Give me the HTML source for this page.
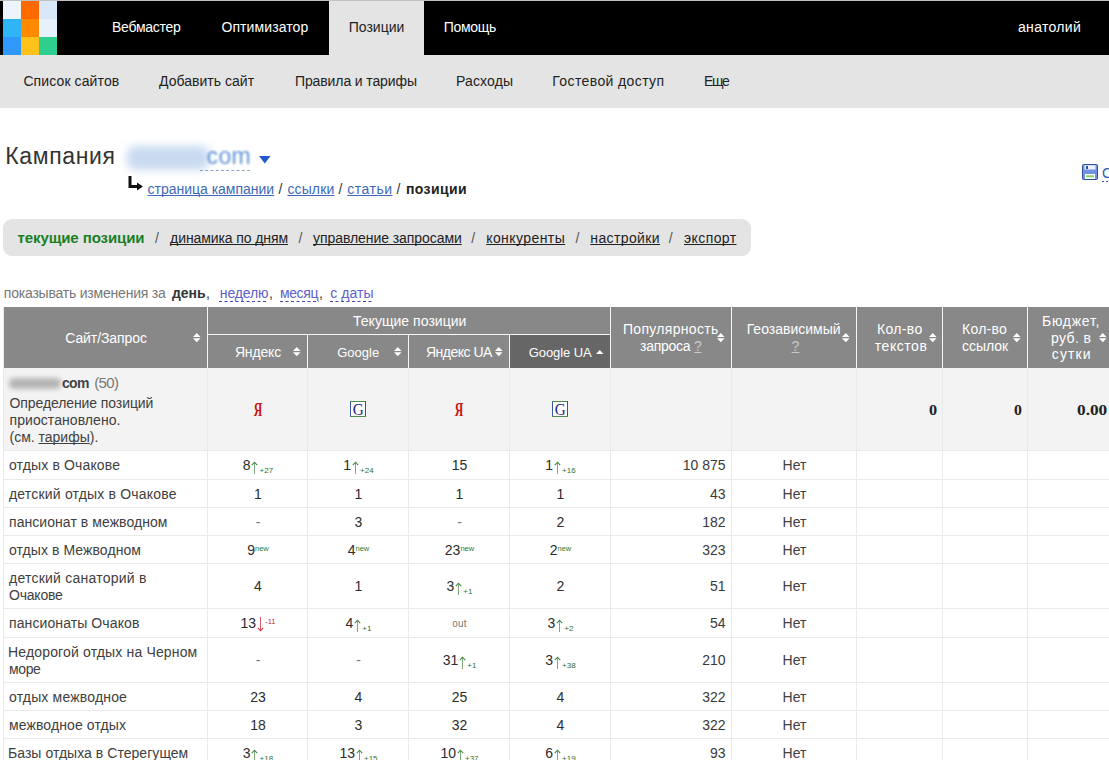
<!DOCTYPE html>
<html><head><meta charset="utf-8"><style>
html,body{margin:0;padding:0;background:#fff;width:1109px;height:760px;overflow:hidden;position:relative}
.t{position:absolute;white-space:nowrap;font-family:'Liberation Sans', sans-serif;text-decoration-skip-ink:none}
.r{position:absolute}
.arw{vertical-align:-3.5px;margin-left:0.5px;margin-right:1.5px}
.up{color:#2f7a2f}
.dn{color:#c82838}
.sub{font-size:8px;letter-spacing:0;position:relative;top:2.6px;color:#2f6f2f}
.sup{font-size:7.5px;letter-spacing:0;position:relative;top:-4.2px}
.out{font-size:10px;color:#777;letter-spacing:0.2px;position:relative;top:-1px}
.dash{color:#777}
</style></head><body>
<div class="r" style="left:0px;top:0px;width:1109px;height:1px;background:#c0c0c0;"></div>
<div class="r" style="left:0px;top:1px;width:1109px;height:54px;background:#000;"></div>
<div class="r" style="left:3px;top:1px;width:18px;height:18px;background:#eef4fc;"></div>
<div class="r" style="left:21px;top:1px;width:18px;height:18px;background:#ff6a00;"></div>
<div class="r" style="left:39px;top:1px;width:18px;height:18px;background:#d9e8f9;"></div>
<div class="r" style="left:3px;top:19px;width:18px;height:18px;background:#2fb5f5;"></div>
<div class="r" style="left:21px;top:19px;width:18px;height:18px;background:#ff8a00;"></div>
<div class="r" style="left:39px;top:19px;width:18px;height:18px;background:#e6f1fc;"></div>
<div class="r" style="left:3px;top:37px;width:18px;height:18px;background:#3097fb;"></div>
<div class="r" style="left:21px;top:37px;width:18px;height:18px;background:#ffc21a;"></div>
<div class="r" style="left:39px;top:37px;width:18px;height:18px;background:#2ecf8e;"></div>
<div class="r" style="left:329px;top:1px;width:95px;height:54px;background:#e4e4e4;"></div>
<div class="t" style="left:112.00px;top:19px;font-size:14px;line-height:16.1px;color:#fff;font-weight:normal;letter-spacing:-0.266px;font-family:'Liberation Sans', sans-serif;">Вебмастер</div>
<div class="t" style="left:221.40px;top:19px;font-size:14px;line-height:16.1px;color:#fff;font-weight:normal;letter-spacing:0.101px;font-family:'Liberation Sans', sans-serif;">Оптимизатор</div>
<div class="t" style="left:348.70px;top:19px;font-size:14px;line-height:16.1px;color:#222;font-weight:normal;letter-spacing:0.022px;font-family:'Liberation Sans', sans-serif;">Позиции</div>
<div class="t" style="left:443.70px;top:19px;font-size:14px;line-height:16.1px;color:#fff;font-weight:normal;letter-spacing:-0.296px;font-family:'Liberation Sans', sans-serif;">Помощь</div>
<div class="t" style="left:1018.00px;top:19px;font-size:14px;line-height:16.1px;color:#fff;font-weight:normal;letter-spacing:0.326px;font-family:'Liberation Sans', sans-serif;">анатолий</div>
<div class="r" style="left:0px;top:55px;width:1109px;height:53px;background:#e4e4e4;"></div>
<div class="t" style="left:23.40px;top:73px;font-size:14px;line-height:16.1px;color:#222;font-weight:normal;letter-spacing:0.107px;font-family:'Liberation Sans', sans-serif;">Список сайтов</div>
<div class="t" style="left:159.00px;top:73px;font-size:14px;line-height:16.1px;color:#222;font-weight:normal;letter-spacing:0.028px;font-family:'Liberation Sans', sans-serif;">Добавить сайт</div>
<div class="t" style="left:295.00px;top:73px;font-size:14px;line-height:16.1px;color:#222;font-weight:normal;letter-spacing:-0.114px;font-family:'Liberation Sans', sans-serif;">Правила и тарифы</div>
<div class="t" style="left:456.00px;top:73px;font-size:14px;line-height:16.1px;color:#222;font-weight:normal;letter-spacing:0.142px;font-family:'Liberation Sans', sans-serif;">Расходы</div>
<div class="t" style="left:552.30px;top:73px;font-size:14px;line-height:16.1px;color:#222;font-weight:normal;letter-spacing:0.388px;font-family:'Liberation Sans', sans-serif;">Гостевой доступ</div>
<div class="t" style="left:704.00px;top:73px;font-size:14px;line-height:16.1px;color:#222;font-weight:normal;letter-spacing:-1.350px;font-family:'Liberation Sans', sans-serif;">Еще</div>
<div class="t" style="left:5.30px;top:143px;font-size:23px;line-height:26.45px;color:#333;font-weight:normal;letter-spacing:0.643px;font-family:'Liberation Sans', sans-serif;">Кампания</div>
<div class="r" style="left:127px;top:146px;width:82px;height:24px;background:#c9daf0;filter:blur(4px);border-radius:8px"></div>
<div class="t" style="left:206.60px;top:143px;font-size:23px;line-height:26.45px;color:#6094d6;font-weight:normal;letter-spacing:0.354px;font-family:'Liberation Sans', sans-serif;filter:blur(1px);">com</div>
<div class="r" style="left:200px;top:170px;width:50px;height:0;border-top:1px dashed #8aa4c8"></div>
<svg class="r" style="left:259px;top:156px" width="12" height="8"><path d="M0 0 L11.5 0 L5.75 7.5 Z" fill="#2258d0"/></svg>
<svg class="r" style="left:127px;top:175px" width="18" height="17"><path d="M3 1 V11.5 H11" stroke="#111" stroke-width="3" fill="none"/><path d="M10 7.5 L16 11.5 L10 15.5 Z" fill="#111"/></svg>
<div class="t" style="left:147.60px;top:181px;font-size:14px;line-height:16.1px;color:#4068b8;font-weight:normal;letter-spacing:-0.018px;font-family:'Liberation Sans', sans-serif;text-decoration:underline;">страница кампании</div>
<div class="t" style="left:278.50px;top:181px;font-size:14px;line-height:16.1px;color:#333;font-weight:normal;letter-spacing:0.000px;font-family:'Liberation Sans', sans-serif;">/</div>
<div class="t" style="left:287.40px;top:181px;font-size:14px;line-height:16.1px;color:#4068b8;font-weight:normal;letter-spacing:0.129px;font-family:'Liberation Sans', sans-serif;text-decoration:underline;">ссылки</div>
<div class="t" style="left:338.50px;top:181px;font-size:14px;line-height:16.1px;color:#333;font-weight:normal;letter-spacing:0.000px;font-family:'Liberation Sans', sans-serif;">/</div>
<div class="t" style="left:347.30px;top:181px;font-size:14px;line-height:16.1px;color:#4068b8;font-weight:normal;letter-spacing:0.492px;font-family:'Liberation Sans', sans-serif;text-decoration:underline;">статьи</div>
<div class="t" style="left:396.50px;top:181px;font-size:14px;line-height:16.1px;color:#333;font-weight:normal;letter-spacing:0.000px;font-family:'Liberation Sans', sans-serif;">/</div>
<div class="t" style="left:406.00px;top:181px;font-size:14px;line-height:16.1px;color:#222;font-weight:bold;letter-spacing:0.400px;font-family:'Liberation Sans', sans-serif;">позиции</div>
<svg class="r" style="left:1082px;top:164px" width="16" height="16"><rect x="0.5" y="0.5" width="15" height="15" rx="1" fill="#6f93e0" stroke="#2f4f9f"/><rect x="2.5" y="1.2" width="11" height="4.3" fill="#eef3ff"/><rect x="4" y="2" width="2" height="3" fill="#2f4f9f"/><rect x="3" y="10" width="10" height="5" fill="#fff"/><rect x="4" y="11.3" width="8" height="2" fill="#8ccc6a"/></svg>
<div class="t" style="left:1102.00px;top:165px;font-size:14px;line-height:16.1px;color:#2a5ab0;font-weight:normal;letter-spacing:0.000px;font-family:'Liberation Sans', sans-serif;">С</div>
<div class="r" style="left:1102px;top:181px;width:8px;height:1px;background:repeating-linear-gradient(to right,#2a5ab0 0 2px,transparent 2px 4px)"></div>
<div class="r" style="left:3px;top:219px;width:748px;height:37px;background:#e4e4e4;border-radius:9px"></div>
<div class="t" style="left:17.50px;top:229px;font-size:15px;line-height:17.25px;color:#1a7f24;font-weight:bold;letter-spacing:-0.091px;font-family:'Liberation Sans', sans-serif;">текущие позиции</div>
<div class="t" style="left:155.00px;top:230px;font-size:14px;line-height:16.1px;color:#555;font-weight:normal;letter-spacing:0.000px;font-family:'Liberation Sans', sans-serif;">/</div>
<div class="t" style="left:298.50px;top:230px;font-size:14px;line-height:16.1px;color:#555;font-weight:normal;letter-spacing:0.000px;font-family:'Liberation Sans', sans-serif;">/</div>
<div class="t" style="left:471.30px;top:230px;font-size:14px;line-height:16.1px;color:#555;font-weight:normal;letter-spacing:0.000px;font-family:'Liberation Sans', sans-serif;">/</div>
<div class="t" style="left:575.40px;top:230px;font-size:14px;line-height:16.1px;color:#555;font-weight:normal;letter-spacing:0.000px;font-family:'Liberation Sans', sans-serif;">/</div>
<div class="t" style="left:668.70px;top:230px;font-size:14px;line-height:16.1px;color:#555;font-weight:normal;letter-spacing:0.000px;font-family:'Liberation Sans', sans-serif;">/</div>
<div class="t" style="left:170.10px;top:230px;font-size:14px;line-height:16.1px;color:#222;font-weight:normal;letter-spacing:-0.093px;font-family:'Liberation Sans', sans-serif;text-decoration:underline;">динамика по дням</div>
<div class="t" style="left:313.00px;top:230px;font-size:14px;line-height:16.1px;color:#222;font-weight:normal;letter-spacing:-0.064px;font-family:'Liberation Sans', sans-serif;text-decoration:underline;">управление запросами</div>
<div class="t" style="left:486.20px;top:230px;font-size:14px;line-height:16.1px;color:#222;font-weight:normal;letter-spacing:0.429px;font-family:'Liberation Sans', sans-serif;text-decoration:underline;">конкуренты</div>
<div class="t" style="left:590.30px;top:230px;font-size:14px;line-height:16.1px;color:#222;font-weight:normal;letter-spacing:0.382px;font-family:'Liberation Sans', sans-serif;text-decoration:underline;">настройки</div>
<div class="t" style="left:684.00px;top:230px;font-size:14px;line-height:16.1px;color:#222;font-weight:normal;letter-spacing:0.405px;font-family:'Liberation Sans', sans-serif;text-decoration:underline;">экспорт</div>
<div class="t" style="left:3.80px;top:285px;font-size:14px;line-height:16.1px;color:#777;font-weight:normal;letter-spacing:-0.212px;font-family:'Liberation Sans', sans-serif;">показывать изменения за</div>
<div class="t" style="left:172.00px;top:285px;font-size:14px;line-height:16.1px;color:#333;font-weight:bold;letter-spacing:-0.043px;font-family:'Liberation Sans', sans-serif;">день</div>
<div class="t" style="left:206.00px;top:285px;font-size:14px;line-height:16.1px;color:#333;font-weight:normal;letter-spacing:0.000px;font-family:'Liberation Sans', sans-serif;">,</div>
<svg class="r" style="left:219px;top:301px" width="49" height="1"><line x1="0" y1="0.5" x2="49" y2="0.5" stroke="#4646a8" stroke-width="1" stroke-dasharray="3 2.5"/></svg>
<svg class="r" style="left:280px;top:301px" width="39" height="1"><line x1="0" y1="0.5" x2="39" y2="0.5" stroke="#4646a8" stroke-width="1" stroke-dasharray="3 2.5"/></svg>
<svg class="r" style="left:330px;top:301px" width="44" height="1"><line x1="0" y1="0.5" x2="44" y2="0.5" stroke="#4646a8" stroke-width="1" stroke-dasharray="3 2.5"/></svg>
<div class="t" style="left:219.80px;top:285px;font-size:14px;line-height:16.1px;color:#6060c8;font-weight:normal;letter-spacing:-0.134px;font-family:'Liberation Sans', sans-serif;">неделю</div>
<div class="t" style="left:269.00px;top:285px;font-size:14px;line-height:16.1px;color:#333;font-weight:normal;letter-spacing:0.000px;font-family:'Liberation Sans', sans-serif;">,</div>
<div class="t" style="left:280.00px;top:285px;font-size:14px;line-height:16.1px;color:#6060c8;font-weight:normal;letter-spacing:-0.398px;font-family:'Liberation Sans', sans-serif;">месяц</div>
<div class="t" style="left:319.00px;top:285px;font-size:14px;line-height:16.1px;color:#333;font-weight:normal;letter-spacing:0.000px;font-family:'Liberation Sans', sans-serif;">,</div>
<div class="t" style="left:330.30px;top:285px;font-size:14px;line-height:16.1px;color:#6060c8;font-weight:normal;letter-spacing:0.070px;font-family:'Liberation Sans', sans-serif;">с даты</div>
<div class="r" style="left:4px;top:307px;width:1109px;height:61px;background:#888888;"></div>
<div class="r" style="left:510px;top:335px;width:100px;height:33px;background:#666666;"></div>
<div class="r" style="left:207px;top:307px;width:1px;height:61px;background:#f6f6f6;"></div>
<div class="r" style="left:208px;top:334px;width:402px;height:1px;background:#f6f6f6;"></div>
<div class="r" style="left:307px;top:335px;width:1px;height:33px;background:#f6f6f6;"></div>
<div class="r" style="left:408px;top:335px;width:1px;height:33px;background:#f6f6f6;"></div>
<div class="r" style="left:509px;top:335px;width:1px;height:33px;background:#f6f6f6;"></div>
<div class="r" style="left:610px;top:307px;width:1px;height:61px;background:#f6f6f6;"></div>
<div class="r" style="left:731px;top:307px;width:1px;height:61px;background:#f6f6f6;"></div>
<div class="r" style="left:856px;top:307px;width:1px;height:61px;background:#f6f6f6;"></div>
<div class="r" style="left:942px;top:307px;width:1px;height:61px;background:#f6f6f6;"></div>
<div class="r" style="left:1027px;top:307px;width:1px;height:61px;background:#f6f6f6;"></div>
<div class="r" style="left:4px;top:368px;width:1109px;height:82px;background:#f3f3f3;"></div>
<div class="r" style="left:3px;top:307px;width:1px;height:460px;background:#eaeaea;"></div>
<div class="r" style="left:207px;top:368px;width:1px;height:400px;background:#eaeaea;"></div>
<div class="r" style="left:307px;top:368px;width:1px;height:400px;background:#eaeaea;"></div>
<div class="r" style="left:408px;top:368px;width:1px;height:400px;background:#eaeaea;"></div>
<div class="r" style="left:509px;top:368px;width:1px;height:400px;background:#eaeaea;"></div>
<div class="r" style="left:610px;top:368px;width:1px;height:400px;background:#eaeaea;"></div>
<div class="r" style="left:731px;top:368px;width:1px;height:400px;background:#eaeaea;"></div>
<div class="r" style="left:856px;top:368px;width:1px;height:400px;background:#eaeaea;"></div>
<div class="r" style="left:942px;top:368px;width:1px;height:400px;background:#eaeaea;"></div>
<div class="r" style="left:1027px;top:368px;width:1px;height:400px;background:#eaeaea;"></div>
<div class="r" style="left:1113px;top:368px;width:1px;height:400px;background:#eaeaea;"></div>
<div class="r" style="left:3px;top:450px;width:1109px;height:1px;background:#eaeaea;"></div>
<div class="r" style="left:3px;top:479px;width:1109px;height:1px;background:#eaeaea;"></div>
<div class="r" style="left:3px;top:507px;width:1109px;height:1px;background:#eaeaea;"></div>
<div class="r" style="left:3px;top:535px;width:1109px;height:1px;background:#eaeaea;"></div>
<div class="r" style="left:3px;top:563px;width:1109px;height:1px;background:#eaeaea;"></div>
<div class="r" style="left:3px;top:608px;width:1109px;height:1px;background:#eaeaea;"></div>
<div class="r" style="left:3px;top:637px;width:1109px;height:1px;background:#eaeaea;"></div>
<div class="r" style="left:3px;top:682px;width:1109px;height:1px;background:#eaeaea;"></div>
<div class="r" style="left:3px;top:710px;width:1109px;height:1px;background:#eaeaea;"></div>
<div class="r" style="left:3px;top:738px;width:1109px;height:1px;background:#eaeaea;"></div>
<div class="r" style="left:3px;top:767px;width:1109px;height:1px;background:#eaeaea;"></div>
<div class="t" style="left:65.20px;top:330px;font-size:14px;line-height:16.1px;color:#fff;font-weight:normal;letter-spacing:-0.077px;font-family:'Liberation Sans', sans-serif;">Сайт/Запрос</div>
<svg class="r" style="left:192.5px;top:333px" width="8" height="10"><path d="M0 4 L3.75 0 L7.5 4 Z" fill="#fff"/><path d="M0 5.2 L7.5 5.2 L3.75 9.2 Z" fill="#fff"/></svg>
<div class="t" style="left:353.00px;top:313px;font-size:14px;line-height:16.1px;color:#fff;font-weight:normal;letter-spacing:0.033px;font-family:'Liberation Sans', sans-serif;">Текущие позиции</div>
<div class="t" style="left:234.90px;top:344px;font-size:14px;line-height:16.1px;color:#fff;font-weight:normal;letter-spacing:-0.156px;font-family:'Liberation Sans', sans-serif;">Яндекс</div>
<div class="t" style="left:337.20px;top:346px;font-size:13px;line-height:14.95px;color:#fff;font-weight:normal;letter-spacing:0.022px;font-family:'Liberation Sans', sans-serif;">Google</div>
<div class="t" style="left:426.00px;top:344px;font-size:14px;line-height:16.1px;color:#fff;font-weight:normal;letter-spacing:-0.510px;font-family:'Liberation Sans', sans-serif;">Яндекс UA</div>
<div class="t" style="left:528.80px;top:346px;font-size:13px;line-height:14.95px;color:#fff;font-weight:normal;letter-spacing:-0.090px;font-family:'Liberation Sans', sans-serif;">Google UA</div>
<svg class="r" style="left:292.5px;top:347px" width="8" height="10"><path d="M0 4 L3.75 0 L7.5 4 Z" fill="#fff"/><path d="M0 5.2 L7.5 5.2 L3.75 9.2 Z" fill="#fff"/></svg>
<svg class="r" style="left:393.5px;top:347px" width="8" height="10"><path d="M0 4 L3.75 0 L7.5 4 Z" fill="#fff"/><path d="M0 5.2 L7.5 5.2 L3.75 9.2 Z" fill="#fff"/></svg>
<svg class="r" style="left:494.5px;top:347px" width="8" height="10"><path d="M0 4 L3.75 0 L7.5 4 Z" fill="#fff"/><path d="M0 5.2 L7.5 5.2 L3.75 9.2 Z" fill="#fff"/></svg>
<svg class="r" style="left:595.5px;top:349.5px" width="8" height="10"><path d="M0 4 L3.75 0 L7.5 4 Z" fill="#fff"/></svg>
<div class="t" style="left:623.00px;top:321px;font-size:14px;line-height:16.1px;color:#fff;font-weight:normal;letter-spacing:0.310px;font-family:'Liberation Sans', sans-serif;">Популярность</div>
<div class="t" style="left:640.00px;top:338px;font-size:14px;line-height:16.1px;color:#fff;font-weight:normal;letter-spacing:-0.254px;font-family:'Liberation Sans', sans-serif;">запроса <span style="color:#c8c8c8;text-decoration:underline">?</span></div>
<svg class="r" style="left:716.5px;top:332.5px" width="8" height="10"><path d="M0 4 L3.75 0 L7.5 4 Z" fill="#fff"/><path d="M0 5.2 L7.5 5.2 L3.75 9.2 Z" fill="#fff"/></svg>
<div class="t" style="left:746.70px;top:321px;font-size:14px;line-height:16.1px;color:#fff;font-weight:normal;letter-spacing:0.006px;font-family:'Liberation Sans', sans-serif;">Геозависимый</div>
<div class="t" style="left:495.50px;width:600px;text-align:center;top:338px;font-size:14px;line-height:16.1px;color:#fff;font-weight:normal;letter-spacing:0.000px;font-family:'Liberation Sans', sans-serif;"><span style="color:#c8c8c8;text-decoration:underline">?</span></div>
<svg class="r" style="left:841.5px;top:333px" width="8" height="10"><path d="M0 4 L3.75 0 L7.5 4 Z" fill="#fff"/><path d="M0 5.2 L7.5 5.2 L3.75 9.2 Z" fill="#fff"/></svg>
<div class="t" style="left:877.00px;top:321px;font-size:14px;line-height:16.1px;color:#fff;font-weight:normal;letter-spacing:0.331px;font-family:'Liberation Sans', sans-serif;">Кол-во</div>
<div class="t" style="left:874.80px;top:338px;font-size:14px;line-height:16.1px;color:#fff;font-weight:normal;letter-spacing:0.539px;font-family:'Liberation Sans', sans-serif;">текстов</div>
<svg class="r" style="left:928.5px;top:333px" width="8" height="10"><path d="M0 4 L3.75 0 L7.5 4 Z" fill="#fff"/><path d="M0 5.2 L7.5 5.2 L3.75 9.2 Z" fill="#fff"/></svg>
<div class="t" style="left:962.00px;top:321px;font-size:14px;line-height:16.1px;color:#fff;font-weight:normal;letter-spacing:0.251px;font-family:'Liberation Sans', sans-serif;">Кол-во</div>
<div class="t" style="left:962.00px;top:338px;font-size:14px;line-height:16.1px;color:#fff;font-weight:normal;letter-spacing:-0.035px;font-family:'Liberation Sans', sans-serif;">ссылок</div>
<svg class="r" style="left:1013px;top:333px" width="8" height="10"><path d="M0 4 L3.75 0 L7.5 4 Z" fill="#fff"/><path d="M0 5.2 L7.5 5.2 L3.75 9.2 Z" fill="#fff"/></svg>
<div class="t" style="left:1042.00px;top:313px;font-size:14px;line-height:16.1px;color:#fff;font-weight:normal;letter-spacing:0.734px;font-family:'Liberation Sans', sans-serif;">Бюджет,</div>
<div class="t" style="left:1051.00px;top:330px;font-size:14px;line-height:16.1px;color:#fff;font-weight:normal;letter-spacing:0.383px;font-family:'Liberation Sans', sans-serif;">руб. в</div>
<div class="t" style="left:1051.80px;top:346px;font-size:14px;line-height:16.1px;color:#fff;font-weight:normal;letter-spacing:1.091px;font-family:'Liberation Sans', sans-serif;">сутки</div>
<svg class="r" style="left:1098.5px;top:333px" width="8" height="10"><path d="M0 4 L3.75 0 L7.5 4 Z" fill="#fff"/><path d="M0 5.2 L7.5 5.2 L3.75 9.2 Z" fill="#fff"/></svg>
<div class="r" style="left:9px;top:378px;width:52px;height:11px;background:#b4b4b4;filter:blur(2.5px);border-radius:5px"></div>
<div class="t" style="left:62.00px;top:375px;font-size:14px;line-height:16.1px;color:#444;font-weight:bold;letter-spacing:-0.669px;font-family:'Liberation Sans', sans-serif;">com</div>
<div class="t" style="left:94.30px;top:374px;font-size:15px;line-height:17.25px;color:#777;font-weight:normal;letter-spacing:-0.693px;font-family:'Liberation Sans', sans-serif;">(50)</div>
<div class="t" style="left:9.50px;top:395px;font-size:14px;line-height:16.1px;color:#404040;font-weight:normal;letter-spacing:-0.089px;font-family:'Liberation Sans', sans-serif;">Определение позиций</div>
<div class="t" style="left:9.50px;top:412px;font-size:14px;line-height:16.1px;color:#404040;font-weight:normal;letter-spacing:0.070px;font-family:'Liberation Sans', sans-serif;">приостановлено.</div>
<div class="t" style="left:9.50px;top:429px;font-size:14px;line-height:16.1px;color:#404040;font-weight:normal;letter-spacing:-0.005px;font-family:'Liberation Sans', sans-serif;">(см. <span style="text-decoration:underline">тарифы</span>).</div>
<svg class="r" style="left:253px;top:401px" width="10" height="16"><text x="5" y="14.8" text-anchor="middle" font-family="Liberation Serif" font-size="19" font-weight="bold" fill="#cc1414" textLength="8.5" lengthAdjust="spacingAndGlyphs">Я</text></svg>
<svg class="r" style="left:350px;top:401px" width="16" height="16"><rect x="0" y="0" width="16" height="16" fill="#fff"/><rect x="0" y="0" width="1" height="16" fill="#3a5aa8"/><rect x="0" y="0" width="16" height="1" fill="#4a8a4a"/><rect x="15" y="0" width="1" height="16" fill="#a03020"/><rect x="0" y="15" width="16" height="1" fill="#4a8a4a"/><text x="8.2" y="14.2" text-anchor="middle" font-family="Liberation Serif" font-size="16.5" fill="#1c2488" textLength="11" lengthAdjust="spacingAndGlyphs">G</text></svg>
<svg class="r" style="left:454px;top:401px" width="10" height="16"><text x="5" y="14.8" text-anchor="middle" font-family="Liberation Serif" font-size="19" font-weight="bold" fill="#cc1414" textLength="8.5" lengthAdjust="spacingAndGlyphs">Я</text></svg>
<svg class="r" style="left:552px;top:401px" width="16" height="16"><rect x="0" y="0" width="16" height="16" fill="#fff"/><rect x="0" y="0" width="1" height="16" fill="#3a5aa8"/><rect x="0" y="0" width="16" height="1" fill="#4a8a4a"/><rect x="15" y="0" width="1" height="16" fill="#a03020"/><rect x="0" y="15" width="16" height="1" fill="#4a8a4a"/><text x="8.2" y="14.2" text-anchor="middle" font-family="Liberation Serif" font-size="16.5" fill="#1c2488" textLength="11" lengthAdjust="spacingAndGlyphs">G</text></svg>
<svg class="r" style="left:927.5px;top:400px" width="10.100000000000023" height="20"><text x="1" y="14.6" font-family="Liberation Serif" font-weight="bold" font-size="14.5" fill="#222" textLength="8.100000000000023" lengthAdjust="spacingAndGlyphs">0</text></svg>
<svg class="r" style="left:1012.8px;top:400px" width="9.900000000000091" height="20"><text x="1" y="14.6" font-family="Liberation Serif" font-weight="bold" font-size="14.5" fill="#222" textLength="7.900000000000091" lengthAdjust="spacingAndGlyphs">0</text></svg>
<svg class="r" style="left:1076.3px;top:400px" width="32.200000000000045" height="20"><text x="1" y="14.6" font-family="Liberation Serif" font-weight="bold" font-size="14.5" fill="#222" textLength="30.200000000000045" lengthAdjust="spacingAndGlyphs">0.00</text></svg>
<div class="t" style="left:9.00px;top:457px;font-size:14px;line-height:16.1px;color:#404040;font-weight:normal;letter-spacing:0.143px;font-family:'Liberation Sans', sans-serif;">отдых в Очакове</div>
<div class="t" style="left:-42.00px;width:600px;text-align:center;top:457px;font-size:14px;line-height:16.1px;color:#2c2c2c;font-weight:normal;letter-spacing:0.000px;font-family:'Liberation Sans', sans-serif;">8<svg class="arw" width="7" height="13"><path d="M3.5 1.2 V13" stroke="#7fa87f" stroke-width="1" fill="none"/><path d="M0.8 4.2 L3.5 1.2 L6.2 4.2" stroke="#3f8a3f" stroke-width="1.1" fill="none"/></svg><span class="sub">+27</span></div>
<div class="t" style="left:58.50px;width:600px;text-align:center;top:457px;font-size:14px;line-height:16.1px;color:#2c2c2c;font-weight:normal;letter-spacing:0.000px;font-family:'Liberation Sans', sans-serif;">1<svg class="arw" width="7" height="13"><path d="M3.5 1.2 V13" stroke="#7fa87f" stroke-width="1" fill="none"/><path d="M0.8 4.2 L3.5 1.2 L6.2 4.2" stroke="#3f8a3f" stroke-width="1.1" fill="none"/></svg><span class="sub">+24</span></div>
<div class="t" style="left:159.50px;width:600px;text-align:center;top:457px;font-size:14px;line-height:16.1px;color:#2c2c2c;font-weight:normal;letter-spacing:0.000px;font-family:'Liberation Sans', sans-serif;">15</div>
<div class="t" style="left:260.50px;width:600px;text-align:center;top:457px;font-size:14px;line-height:16.1px;color:#2c2c2c;font-weight:normal;letter-spacing:0.000px;font-family:'Liberation Sans', sans-serif;">1<svg class="arw" width="7" height="13"><path d="M3.5 1.2 V13" stroke="#7fa87f" stroke-width="1" fill="none"/><path d="M0.8 4.2 L3.5 1.2 L6.2 4.2" stroke="#3f8a3f" stroke-width="1.1" fill="none"/></svg><span class="sub">+16</span></div>
<div class="t" style="left:125.50px;width:600px;text-align:right;top:457px;font-size:14px;line-height:16.1px;color:#3a3a3a;font-weight:normal;letter-spacing:0.000px;font-family:'Liberation Sans', sans-serif;">10 875</div>
<div class="t" style="left:494.50px;width:600px;text-align:center;top:457px;font-size:14px;line-height:16.1px;color:#404040;font-weight:normal;letter-spacing:0.000px;font-family:'Liberation Sans', sans-serif;">Нет</div>
<div class="t" style="left:9.00px;top:486px;font-size:14px;line-height:16.1px;color:#404040;font-weight:normal;letter-spacing:0.187px;font-family:'Liberation Sans', sans-serif;">детский отдых в Очакове</div>
<div class="t" style="left:-42.00px;width:600px;text-align:center;top:486px;font-size:14px;line-height:16.1px;color:#2c2c2c;font-weight:normal;letter-spacing:0.000px;font-family:'Liberation Sans', sans-serif;">1</div>
<div class="t" style="left:58.50px;width:600px;text-align:center;top:486px;font-size:14px;line-height:16.1px;color:#2c2c2c;font-weight:normal;letter-spacing:0.000px;font-family:'Liberation Sans', sans-serif;">1</div>
<div class="t" style="left:159.50px;width:600px;text-align:center;top:486px;font-size:14px;line-height:16.1px;color:#2c2c2c;font-weight:normal;letter-spacing:0.000px;font-family:'Liberation Sans', sans-serif;">1</div>
<div class="t" style="left:260.50px;width:600px;text-align:center;top:486px;font-size:14px;line-height:16.1px;color:#2c2c2c;font-weight:normal;letter-spacing:0.000px;font-family:'Liberation Sans', sans-serif;">1</div>
<div class="t" style="left:125.50px;width:600px;text-align:right;top:486px;font-size:14px;line-height:16.1px;color:#3a3a3a;font-weight:normal;letter-spacing:0.000px;font-family:'Liberation Sans', sans-serif;">43</div>
<div class="t" style="left:494.50px;width:600px;text-align:center;top:486px;font-size:14px;line-height:16.1px;color:#404040;font-weight:normal;letter-spacing:0.000px;font-family:'Liberation Sans', sans-serif;">Нет</div>
<div class="t" style="left:9.00px;top:514px;font-size:14px;line-height:16.1px;color:#404040;font-weight:normal;letter-spacing:0.060px;font-family:'Liberation Sans', sans-serif;">пансионат в межводном</div>
<div class="t" style="left:-42.00px;width:600px;text-align:center;top:514px;font-size:14px;line-height:16.1px;color:#2c2c2c;font-weight:normal;letter-spacing:0.000px;font-family:'Liberation Sans', sans-serif;"><span class="dash">-</span></div>
<div class="t" style="left:58.50px;width:600px;text-align:center;top:514px;font-size:14px;line-height:16.1px;color:#2c2c2c;font-weight:normal;letter-spacing:0.000px;font-family:'Liberation Sans', sans-serif;">3</div>
<div class="t" style="left:159.50px;width:600px;text-align:center;top:514px;font-size:14px;line-height:16.1px;color:#2c2c2c;font-weight:normal;letter-spacing:0.000px;font-family:'Liberation Sans', sans-serif;"><span class="dash">-</span></div>
<div class="t" style="left:260.50px;width:600px;text-align:center;top:514px;font-size:14px;line-height:16.1px;color:#2c2c2c;font-weight:normal;letter-spacing:0.000px;font-family:'Liberation Sans', sans-serif;">2</div>
<div class="t" style="left:125.50px;width:600px;text-align:right;top:514px;font-size:14px;line-height:16.1px;color:#3a3a3a;font-weight:normal;letter-spacing:0.000px;font-family:'Liberation Sans', sans-serif;">182</div>
<div class="t" style="left:494.50px;width:600px;text-align:center;top:514px;font-size:14px;line-height:16.1px;color:#404040;font-weight:normal;letter-spacing:0.000px;font-family:'Liberation Sans', sans-serif;">Нет</div>
<div class="t" style="left:9.00px;top:542px;font-size:14px;line-height:16.1px;color:#404040;font-weight:normal;letter-spacing:0.073px;font-family:'Liberation Sans', sans-serif;">отдых в Межводном</div>
<div class="t" style="left:-42.00px;width:600px;text-align:center;top:542px;font-size:14px;line-height:16.1px;color:#2c2c2c;font-weight:normal;letter-spacing:0.000px;font-family:'Liberation Sans', sans-serif;">9<span class="sup up">new</span></div>
<div class="t" style="left:58.50px;width:600px;text-align:center;top:542px;font-size:14px;line-height:16.1px;color:#2c2c2c;font-weight:normal;letter-spacing:0.000px;font-family:'Liberation Sans', sans-serif;">4<span class="sup up">new</span></div>
<div class="t" style="left:159.50px;width:600px;text-align:center;top:542px;font-size:14px;line-height:16.1px;color:#2c2c2c;font-weight:normal;letter-spacing:0.000px;font-family:'Liberation Sans', sans-serif;">23<span class="sup up">new</span></div>
<div class="t" style="left:260.50px;width:600px;text-align:center;top:542px;font-size:14px;line-height:16.1px;color:#2c2c2c;font-weight:normal;letter-spacing:0.000px;font-family:'Liberation Sans', sans-serif;">2<span class="sup up">new</span></div>
<div class="t" style="left:125.50px;width:600px;text-align:right;top:542px;font-size:14px;line-height:16.1px;color:#3a3a3a;font-weight:normal;letter-spacing:0.000px;font-family:'Liberation Sans', sans-serif;">323</div>
<div class="t" style="left:494.50px;width:600px;text-align:center;top:542px;font-size:14px;line-height:16.1px;color:#404040;font-weight:normal;letter-spacing:0.000px;font-family:'Liberation Sans', sans-serif;">Нет</div>
<div class="t" style="left:9.00px;top:570px;font-size:14px;line-height:16.1px;color:#404040;font-weight:normal;letter-spacing:0.236px;font-family:'Liberation Sans', sans-serif;">детский санаторий в</div>
<div class="t" style="left:9.00px;top:587px;font-size:14px;line-height:16.1px;color:#404040;font-weight:normal;letter-spacing:-0.203px;font-family:'Liberation Sans', sans-serif;">Очакове</div>
<div class="t" style="left:-42.00px;width:600px;text-align:center;top:578px;font-size:14px;line-height:16.1px;color:#2c2c2c;font-weight:normal;letter-spacing:0.000px;font-family:'Liberation Sans', sans-serif;">4</div>
<div class="t" style="left:58.50px;width:600px;text-align:center;top:578px;font-size:14px;line-height:16.1px;color:#2c2c2c;font-weight:normal;letter-spacing:0.000px;font-family:'Liberation Sans', sans-serif;">1</div>
<div class="t" style="left:159.50px;width:600px;text-align:center;top:578px;font-size:14px;line-height:16.1px;color:#2c2c2c;font-weight:normal;letter-spacing:0.000px;font-family:'Liberation Sans', sans-serif;">3<svg class="arw" width="7" height="13"><path d="M3.5 1.2 V13" stroke="#7fa87f" stroke-width="1" fill="none"/><path d="M0.8 4.2 L3.5 1.2 L6.2 4.2" stroke="#3f8a3f" stroke-width="1.1" fill="none"/></svg><span class="sub">+1</span></div>
<div class="t" style="left:260.50px;width:600px;text-align:center;top:578px;font-size:14px;line-height:16.1px;color:#2c2c2c;font-weight:normal;letter-spacing:0.000px;font-family:'Liberation Sans', sans-serif;">2</div>
<div class="t" style="left:125.50px;width:600px;text-align:right;top:578px;font-size:14px;line-height:16.1px;color:#3a3a3a;font-weight:normal;letter-spacing:0.000px;font-family:'Liberation Sans', sans-serif;">51</div>
<div class="t" style="left:494.50px;width:600px;text-align:center;top:578px;font-size:14px;line-height:16.1px;color:#404040;font-weight:normal;letter-spacing:0.000px;font-family:'Liberation Sans', sans-serif;">Нет</div>
<div class="t" style="left:9.00px;top:615px;font-size:14px;line-height:16.1px;color:#404040;font-weight:normal;letter-spacing:0.099px;font-family:'Liberation Sans', sans-serif;">пансионаты Очаков</div>
<div class="t" style="left:-42.00px;width:600px;text-align:center;top:615px;font-size:14px;line-height:16.1px;color:#2c2c2c;font-weight:normal;letter-spacing:0.000px;font-family:'Liberation Sans', sans-serif;">13<svg class="arw" width="7" height="15"><path d="M3.5 0 V13.8" stroke="#d85a6a" stroke-width="1" fill="none"/><path d="M0.8 10.8 L3.5 13.8 L6.2 10.8" stroke="#d03040" stroke-width="1.1" fill="none"/></svg><span class="sup dn">-11</span></div>
<div class="t" style="left:58.50px;width:600px;text-align:center;top:615px;font-size:14px;line-height:16.1px;color:#2c2c2c;font-weight:normal;letter-spacing:0.000px;font-family:'Liberation Sans', sans-serif;">4<svg class="arw" width="7" height="13"><path d="M3.5 1.2 V13" stroke="#7fa87f" stroke-width="1" fill="none"/><path d="M0.8 4.2 L3.5 1.2 L6.2 4.2" stroke="#3f8a3f" stroke-width="1.1" fill="none"/></svg><span class="sub">+1</span></div>
<div class="t" style="left:159.50px;width:600px;text-align:center;top:615px;font-size:14px;line-height:16.1px;color:#2c2c2c;font-weight:normal;letter-spacing:0.000px;font-family:'Liberation Sans', sans-serif;"><span class="out">out</span></div>
<div class="t" style="left:260.50px;width:600px;text-align:center;top:615px;font-size:14px;line-height:16.1px;color:#2c2c2c;font-weight:normal;letter-spacing:0.000px;font-family:'Liberation Sans', sans-serif;">3<svg class="arw" width="7" height="13"><path d="M3.5 1.2 V13" stroke="#7fa87f" stroke-width="1" fill="none"/><path d="M0.8 4.2 L3.5 1.2 L6.2 4.2" stroke="#3f8a3f" stroke-width="1.1" fill="none"/></svg><span class="sub">+2</span></div>
<div class="t" style="left:125.50px;width:600px;text-align:right;top:615px;font-size:14px;line-height:16.1px;color:#3a3a3a;font-weight:normal;letter-spacing:0.000px;font-family:'Liberation Sans', sans-serif;">54</div>
<div class="t" style="left:494.50px;width:600px;text-align:center;top:615px;font-size:14px;line-height:16.1px;color:#404040;font-weight:normal;letter-spacing:0.000px;font-family:'Liberation Sans', sans-serif;">Нет</div>
<div class="t" style="left:8.00px;top:644px;font-size:14px;line-height:16.1px;color:#404040;font-weight:normal;letter-spacing:0.159px;font-family:'Liberation Sans', sans-serif;">Недорогой отдых на Черном</div>
<div class="t" style="left:9.00px;top:661px;font-size:14px;line-height:16.1px;color:#404040;font-weight:normal;letter-spacing:-0.366px;font-family:'Liberation Sans', sans-serif;">море</div>
<div class="t" style="left:-42.00px;width:600px;text-align:center;top:652px;font-size:14px;line-height:16.1px;color:#2c2c2c;font-weight:normal;letter-spacing:0.000px;font-family:'Liberation Sans', sans-serif;"><span class="dash">-</span></div>
<div class="t" style="left:58.50px;width:600px;text-align:center;top:652px;font-size:14px;line-height:16.1px;color:#2c2c2c;font-weight:normal;letter-spacing:0.000px;font-family:'Liberation Sans', sans-serif;"><span class="dash">-</span></div>
<div class="t" style="left:159.50px;width:600px;text-align:center;top:652px;font-size:14px;line-height:16.1px;color:#2c2c2c;font-weight:normal;letter-spacing:0.000px;font-family:'Liberation Sans', sans-serif;">31<svg class="arw" width="7" height="13"><path d="M3.5 1.2 V13" stroke="#7fa87f" stroke-width="1" fill="none"/><path d="M0.8 4.2 L3.5 1.2 L6.2 4.2" stroke="#3f8a3f" stroke-width="1.1" fill="none"/></svg><span class="sub">+1</span></div>
<div class="t" style="left:260.50px;width:600px;text-align:center;top:652px;font-size:14px;line-height:16.1px;color:#2c2c2c;font-weight:normal;letter-spacing:0.000px;font-family:'Liberation Sans', sans-serif;">3<svg class="arw" width="7" height="13"><path d="M3.5 1.2 V13" stroke="#7fa87f" stroke-width="1" fill="none"/><path d="M0.8 4.2 L3.5 1.2 L6.2 4.2" stroke="#3f8a3f" stroke-width="1.1" fill="none"/></svg><span class="sub">+38</span></div>
<div class="t" style="left:125.50px;width:600px;text-align:right;top:652px;font-size:14px;line-height:16.1px;color:#3a3a3a;font-weight:normal;letter-spacing:0.000px;font-family:'Liberation Sans', sans-serif;">210</div>
<div class="t" style="left:494.50px;width:600px;text-align:center;top:652px;font-size:14px;line-height:16.1px;color:#404040;font-weight:normal;letter-spacing:0.000px;font-family:'Liberation Sans', sans-serif;">Нет</div>
<div class="t" style="left:9.00px;top:689px;font-size:14px;line-height:16.1px;color:#404040;font-weight:normal;letter-spacing:0.178px;font-family:'Liberation Sans', sans-serif;">отдых межводное</div>
<div class="t" style="left:-42.00px;width:600px;text-align:center;top:689px;font-size:14px;line-height:16.1px;color:#2c2c2c;font-weight:normal;letter-spacing:0.000px;font-family:'Liberation Sans', sans-serif;">23</div>
<div class="t" style="left:58.50px;width:600px;text-align:center;top:689px;font-size:14px;line-height:16.1px;color:#2c2c2c;font-weight:normal;letter-spacing:0.000px;font-family:'Liberation Sans', sans-serif;">4</div>
<div class="t" style="left:159.50px;width:600px;text-align:center;top:689px;font-size:14px;line-height:16.1px;color:#2c2c2c;font-weight:normal;letter-spacing:0.000px;font-family:'Liberation Sans', sans-serif;">25</div>
<div class="t" style="left:260.50px;width:600px;text-align:center;top:689px;font-size:14px;line-height:16.1px;color:#2c2c2c;font-weight:normal;letter-spacing:0.000px;font-family:'Liberation Sans', sans-serif;">4</div>
<div class="t" style="left:125.50px;width:600px;text-align:right;top:689px;font-size:14px;line-height:16.1px;color:#3a3a3a;font-weight:normal;letter-spacing:0.000px;font-family:'Liberation Sans', sans-serif;">322</div>
<div class="t" style="left:494.50px;width:600px;text-align:center;top:689px;font-size:14px;line-height:16.1px;color:#404040;font-weight:normal;letter-spacing:0.000px;font-family:'Liberation Sans', sans-serif;">Нет</div>
<div class="t" style="left:9.00px;top:717px;font-size:14px;line-height:16.1px;color:#404040;font-weight:normal;letter-spacing:0.107px;font-family:'Liberation Sans', sans-serif;">межводное отдых</div>
<div class="t" style="left:-42.00px;width:600px;text-align:center;top:717px;font-size:14px;line-height:16.1px;color:#2c2c2c;font-weight:normal;letter-spacing:0.000px;font-family:'Liberation Sans', sans-serif;">18</div>
<div class="t" style="left:58.50px;width:600px;text-align:center;top:717px;font-size:14px;line-height:16.1px;color:#2c2c2c;font-weight:normal;letter-spacing:0.000px;font-family:'Liberation Sans', sans-serif;">3</div>
<div class="t" style="left:159.50px;width:600px;text-align:center;top:717px;font-size:14px;line-height:16.1px;color:#2c2c2c;font-weight:normal;letter-spacing:0.000px;font-family:'Liberation Sans', sans-serif;">32</div>
<div class="t" style="left:260.50px;width:600px;text-align:center;top:717px;font-size:14px;line-height:16.1px;color:#2c2c2c;font-weight:normal;letter-spacing:0.000px;font-family:'Liberation Sans', sans-serif;">4</div>
<div class="t" style="left:125.50px;width:600px;text-align:right;top:717px;font-size:14px;line-height:16.1px;color:#3a3a3a;font-weight:normal;letter-spacing:0.000px;font-family:'Liberation Sans', sans-serif;">322</div>
<div class="t" style="left:494.50px;width:600px;text-align:center;top:717px;font-size:14px;line-height:16.1px;color:#404040;font-weight:normal;letter-spacing:0.000px;font-family:'Liberation Sans', sans-serif;">Нет</div>
<div class="t" style="left:8.00px;top:745px;font-size:14px;line-height:16.1px;color:#404040;font-weight:normal;letter-spacing:0.041px;font-family:'Liberation Sans', sans-serif;">Базы отдыха в Стерегущем</div>
<div class="t" style="left:-42.00px;width:600px;text-align:center;top:745px;font-size:14px;line-height:16.1px;color:#2c2c2c;font-weight:normal;letter-spacing:0.000px;font-family:'Liberation Sans', sans-serif;">3<svg class="arw" width="7" height="13"><path d="M3.5 1.2 V13" stroke="#7fa87f" stroke-width="1" fill="none"/><path d="M0.8 4.2 L3.5 1.2 L6.2 4.2" stroke="#3f8a3f" stroke-width="1.1" fill="none"/></svg><span class="sub">+18</span></div>
<div class="t" style="left:58.50px;width:600px;text-align:center;top:745px;font-size:14px;line-height:16.1px;color:#2c2c2c;font-weight:normal;letter-spacing:0.000px;font-family:'Liberation Sans', sans-serif;">13<svg class="arw" width="7" height="13"><path d="M3.5 1.2 V13" stroke="#7fa87f" stroke-width="1" fill="none"/><path d="M0.8 4.2 L3.5 1.2 L6.2 4.2" stroke="#3f8a3f" stroke-width="1.1" fill="none"/></svg><span class="sub">+15</span></div>
<div class="t" style="left:159.50px;width:600px;text-align:center;top:745px;font-size:14px;line-height:16.1px;color:#2c2c2c;font-weight:normal;letter-spacing:0.000px;font-family:'Liberation Sans', sans-serif;">10<svg class="arw" width="7" height="13"><path d="M3.5 1.2 V13" stroke="#7fa87f" stroke-width="1" fill="none"/><path d="M0.8 4.2 L3.5 1.2 L6.2 4.2" stroke="#3f8a3f" stroke-width="1.1" fill="none"/></svg><span class="sub">+37</span></div>
<div class="t" style="left:260.50px;width:600px;text-align:center;top:745px;font-size:14px;line-height:16.1px;color:#2c2c2c;font-weight:normal;letter-spacing:0.000px;font-family:'Liberation Sans', sans-serif;">6<svg class="arw" width="7" height="13"><path d="M3.5 1.2 V13" stroke="#7fa87f" stroke-width="1" fill="none"/><path d="M0.8 4.2 L3.5 1.2 L6.2 4.2" stroke="#3f8a3f" stroke-width="1.1" fill="none"/></svg><span class="sub">+19</span></div>
<div class="t" style="left:125.50px;width:600px;text-align:right;top:745px;font-size:14px;line-height:16.1px;color:#3a3a3a;font-weight:normal;letter-spacing:0.000px;font-family:'Liberation Sans', sans-serif;">93</div>
<div class="t" style="left:494.50px;width:600px;text-align:center;top:745px;font-size:14px;line-height:16.1px;color:#404040;font-weight:normal;letter-spacing:0.000px;font-family:'Liberation Sans', sans-serif;">Нет</div>
</body></html>
